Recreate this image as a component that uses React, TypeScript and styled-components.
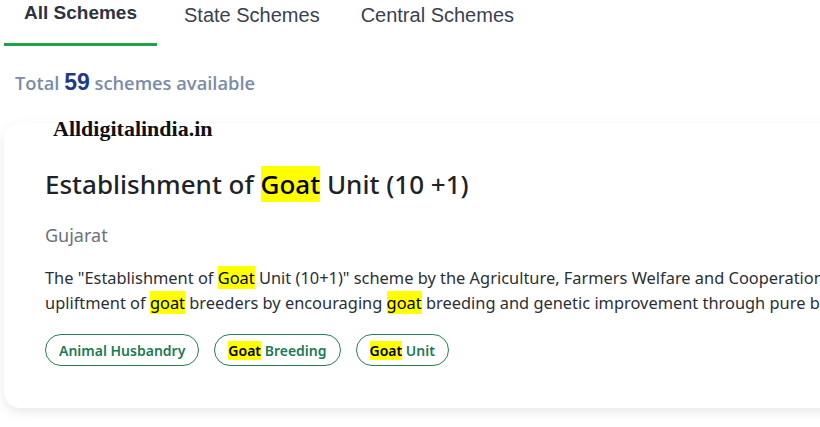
import React, { useState } from 'react';
import styled, { createGlobalStyle } from 'styled-components';

const GlobalStyle = createGlobalStyle`
  html, body {
    margin: 0;
    padding: 0;
    background: #ffffff;
    overflow: hidden;
  }
  body {
    font-family: "Noto Sans", "Open Sans", sans-serif;
  }
`;

const tabs = ['All Schemes', 'State Schemes', 'Central Schemes'];

const tags = [
  { hl: '', rest: 'Animal Husbandry' },
  { hl: 'Goat', rest: 'Breeding' },
  { hl: 'Goat', rest: 'Unit' },
];

export default function App() {
  const [active, setActive] = useState(0);

  return (
    <Page>
      <GlobalStyle />
      <TabBar>
        {tabs.map((t, i) => (
          <Tab key={t} $active={i === active} onClick={() => setActive(i)}>
            {t}
          </Tab>
        ))}
      </TabBar>

      <Total>
        Total <Count>59</Count> schemes available
      </Total>

      <CardWrap>
        <Watermark>Alldigitalindia.in</Watermark>
        <Card>
          <Title>
            Establishment of <Hl>Goat</Hl> Unit (10 +1)
          </Title>
          <State>Gujarat</State>
          <Desc>
            The "Establishment of <Hl>Goat</Hl> Unit (10+1)" scheme by the Agriculture, Farmers Welfare and Cooperation Department, Gujarat aims at the economic
            <br />
            upliftment of <Hl>goat</Hl> breeders by encouraging <Hl>goat</Hl> breeding and genetic improvement through pure breed bucks.
          </Desc>
          <Tags>
            {tags.map((t) => (
              <Tag key={t.hl + t.rest}>
                {t.hl && (
                  <>
                    <Hl>{t.hl}</Hl>&nbsp;
                  </>
                )}
                {t.rest}
              </Tag>
            ))}
          </Tags>
        </Card>
      </CardWrap>
    </Page>
  );
}

const Page = styled.div`
  width: 820px;
  height: 427px;
  overflow: hidden;
`;

const TabBar = styled.div`
  display: flex;
  padding-left: 4px;
  gap: 13px;
`;

const Tab = styled.div<{ $active: boolean }>`
  font-family: "Liberation Sans", Arial, sans-serif;
  font-size: ${(p) => (p.$active ? '19px' : '20px')};
  font-weight: ${(p) => (p.$active ? 700 : 400)};
  color: ${(p) => (p.$active ? '#2d3340' : '#3a4150')};
  padding: ${(p) => (p.$active ? '2px 20px 0' : '4px 14px 0')};
  height: ${(p) => (p.$active ? '41px' : '39px')};
  line-height: 22px;
  border-bottom: 3px solid ${(p) => (p.$active ? '#1ea34b' : 'transparent')};
  cursor: pointer;
`;

const Total = styled.div`
  margin: 24px 0 0 15px;
  font-family: "Open Sans", "Noto Sans", sans-serif;
  font-weight: 600;
  font-size: 18.3px;
  line-height: 24px;
  color: #7a8ca8;
`;

const Count = styled.span`
  font-family: "Liberation Sans", Arial, sans-serif;
  font-weight: 700;
  font-size: 23px;
  color: #1e3a8a;
`;

const CardWrap = styled.div`
  position: relative;
  margin: 18px 0 0 4px;
  padding-top: 10px;
`;

const Watermark = styled.div`
  position: absolute;
  left: 49px;
  top: 3px;
  z-index: 2;
  font-family: "Liberation Serif", "Times New Roman", serif;
  font-weight: 700;
  font-size: 22px;
  color: #111;
`;

const Card = styled.div`
  width: 1200px;
  box-sizing: border-box;
  background: #fff;
  border-radius: 16px;
  box-shadow: 0 4px 12px rgba(0, 0, 0, 0.09);
  padding: 43px 41px 42px;
`;

const Title = styled.h2`
  margin: 0;
  font-family: "Noto Sans", sans-serif;
  font-weight: 500;
  font-size: 26px;
  line-height: 36px;
  color: #1f2328;
`;

const Hl = styled.mark`
  background: #ffff00;
  color: #000;
`;

const State = styled.div`
  margin-top: 20px;
  font-size: 18px;
  line-height: 26px;
  color: #6b7280;
`;

const Desc = styled.p`
  margin: 17px 0 0;
  font-size: 16.4px;
  line-height: 25px;
  color: #2b2f36;
`;

const Tags = styled.div`
  display: flex;
  gap: 15px;
  margin-top: 19px;
`;

const Tag = styled.span`
  display: inline-flex;
  align-items: center;
  height: 32px;
  box-sizing: border-box;
  padding: 0 13px;
  border: 1px solid #2a7d52;
  border-radius: 16px;
  font-size: 14px;
  font-weight: 600;
  color: #1b7a55;
`;
